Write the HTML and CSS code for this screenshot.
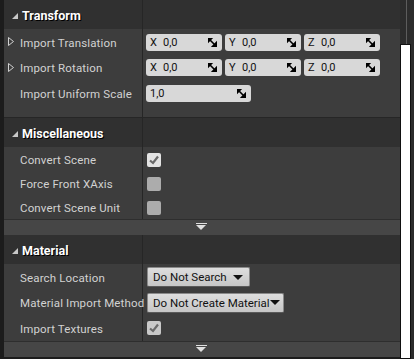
FILE: index.html
```html
<!DOCTYPE html>
<html lang="en">
<head>
    <meta charset="UTF-8">
    <title>Import Options</title>
    <link rel="stylesheet" href="styles.css">
</head>
<body>
    <div class="window">
        <div class="panel">
            <!-- Transform -->
            <section class="category transform">
                <div class="cat-head">
                    <div class="head-name"><span class="caret"></span>Transform</div>
                    <div class="head-value"></div>
                </div>
                <div class="cat-body">
                    <div class="row">
                        <div class="name"><svg class="expander" viewBox="0 0 6 9"><polygon points="0.5,0.5 5.5,4.5 0.5,8.5"/></svg>Import Translation</div>
                        <div class="value">
                            <div class="num"><span class="axis">X</span><span class="val">0,0</span><svg class="spin" viewBox="0 0 9 9"><polygon points="0,0 4,0 0,4"/><polygon points="9,9 9,4 4,9"/><line x1="1.5" y1="1.5" x2="7.5" y2="7.5"/></svg></div>
                            <div class="num"><span class="axis">Y</span><span class="val">0,0</span><svg class="spin" viewBox="0 0 9 9"><polygon points="0,0 4,0 0,4"/><polygon points="9,9 9,4 4,9"/><line x1="1.5" y1="1.5" x2="7.5" y2="7.5"/></svg></div>
                            <div class="num"><span class="axis">Z</span><span class="val">0,0</span><svg class="spin" viewBox="0 0 9 9"><polygon points="0,0 4,0 0,4"/><polygon points="9,9 9,4 4,9"/><line x1="1.5" y1="1.5" x2="7.5" y2="7.5"/></svg></div>
                        </div>
                    </div>
                    <div class="row">
                        <div class="name"><svg class="expander" viewBox="0 0 6 9"><polygon points="0.5,0.5 5.5,4.5 0.5,8.5"/></svg>Import Rotation</div>
                        <div class="value">
                            <div class="num"><span class="axis">X</span><span class="val">0,0</span><svg class="spin" viewBox="0 0 9 9"><polygon points="0,0 4,0 0,4"/><polygon points="9,9 9,4 4,9"/><line x1="1.5" y1="1.5" x2="7.5" y2="7.5"/></svg></div>
                            <div class="num"><span class="axis">Y</span><span class="val">0,0</span><svg class="spin" viewBox="0 0 9 9"><polygon points="0,0 4,0 0,4"/><polygon points="9,9 9,4 4,9"/><line x1="1.5" y1="1.5" x2="7.5" y2="7.5"/></svg></div>
                            <div class="num"><span class="axis">Z</span><span class="val">0,0</span><svg class="spin" viewBox="0 0 9 9"><polygon points="0,0 4,0 0,4"/><polygon points="9,9 9,4 4,9"/><line x1="1.5" y1="1.5" x2="7.5" y2="7.5"/></svg></div>
                        </div>
                    </div>
                    <div class="row">
                        <div class="name">Import Uniform Scale</div>
                        <div class="value">
                            <div class="num wide"><span class="val">1,0</span><svg class="spin" viewBox="0 0 9 9"><polygon points="0,0 4,0 0,4"/><polygon points="9,9 9,4 4,9"/><line x1="1.5" y1="1.5" x2="7.5" y2="7.5"/></svg></div>
                        </div>
                    </div>
                    <div class="row spacer">
                        <div class="name"></div>
                        <div class="value"></div>
                    </div>
                </div>
            </section>

            <!-- Miscellaneous -->
            <section class="category">
                <div class="cat-head">
                    <div class="head-name"><span class="caret"></span>Miscellaneous</div>
                    <div class="head-value"></div>
                </div>
                <div class="cat-body misc">
                    <div class="row">
                        <div class="name">Convert Scene</div>
                        <div class="value"><span class="check checked"><svg viewBox="0 0 14 14"><polyline points="3,7.5 6,10 11,3.5"/></svg></span></div>
                    </div>
                    <div class="row">
                        <div class="name">Force Front XAxis</div>
                        <div class="value"><span class="check"></span></div>
                    </div>
                    <div class="row">
                        <div class="name">Convert Scene Unit</div>
                        <div class="value"><span class="check"></span></div>
                    </div>
                </div>
                <div class="more"><span class="more-arrow"></span></div>
            </section>

            <!-- Material -->
            <section class="category">
                <div class="cat-head">
                    <div class="head-name"><span class="caret"></span>Material</div>
                    <div class="head-value"></div>
                </div>
                <div class="cat-body">
                    <div class="row">
                        <div class="name">Search Location</div>
                        <div class="value"><div class="combo">Do Not Search<span class="combo-arrow"></span></div></div>
                    </div>
                    <div class="row">
                        <div class="name">Material Import Method</div>
                        <div class="value"><div class="combo tight">Do Not Create Material<span class="combo-arrow"></span></div></div>
                    </div>
                    <div class="row">
                        <div class="name">Import Textures</div>
                        <div class="value"><span class="check checked dim"><svg viewBox="0 0 14 14"><polyline points="3,7.5 6,10 11,3.5"/></svg></span></div>
                    </div>
                </div>
                <div class="more"><span class="more-arrow"></span></div>
            </section>
        </div>

        <div class="scroll">
            <div class="track"></div>
            <div class="thumb"></div>
        </div>
    </div>
</body>
</html>
```

FILE: styles.css
```css
/* Base */
* {
    margin: 0;
    padding: 0;
    box-sizing: border-box;
}

body {
    background: #1c1c1c;
    font-family: 'Roboto', 'Liberation Sans', sans-serif;
    font-size: 11.5px;
    overflow: hidden;
}

.window {
    display: flex;
    height: 359px;
    padding-left: 4px;
}

.panel {
    width: 396px;
    display: flex;
    flex-direction: column;
}

.transform {
    border-bottom: 1px solid #262626;
}

/* Category header */
.cat-head {
    display: flex;
    height: 29px;
    background: #303030;
}

.head-name {
    width: 139px;
    display: flex;
    align-items: center;
    padding: 1px 0 0 4px;
    border-right: 1px solid #262626;
    color: #fff;
    font-size: 12.5px;
    font-weight: bold;
    text-shadow: 1px 1px 0 #000;
}

.head-value {
    flex: 1;
}

.caret {
    width: 0;
    height: 0;
    margin: 1px 4px 0 4px;
    border-left: 6px solid transparent;
    border-bottom: 6px solid #c8c8c8;
}

/* Rows */
.cat-body {
    background: #3d3d3d;
}

.row {
    display: flex;
    height: 25.5px;
}

.misc .row {
    height: 24px;
}

.row.spacer {
    height: 11.5px;
}

.name {
    width: 139px;
    display: flex;
    align-items: center;
    padding: 2px 0 0 16px;
    border-right: 1px solid #262626;
    color: #d2d2d2;
    letter-spacing: 0.15px;
    position: relative;
    white-space: nowrap;
}

.expander {
    position: absolute;
    left: 4px;
    top: 8px;
    width: 6px;
    height: 9px;
    fill: none;
    stroke: #d0d0d0;
    stroke-width: 1;
}

.value {
    flex: 1;
    display: flex;
    align-items: center;
    gap: 3px;
    padding: 1px 0 0 3px;
}

/* Numeric spin boxes */
.num {
    width: 76px;
    height: 17px;
    display: flex;
    align-items: center;
    padding: 0 5px 0 4px;
    background: #d8d8d8;
    border-radius: 3px;
    color: #111;
    font-size: 11px;
}

.num.wide {
    width: 105px;
}

.axis {
    width: 13px;
}

.val {
    flex: 1;
}

.spin {
    width: 9px;
    height: 9px;
    fill: #000;
    stroke: #000;
    stroke-width: 1.6;
}

/* Checkboxes */
.check {
    width: 14px;
    height: 14px;
    margin-left: 1px;
    border-radius: 2px;
    background: #acacac;
}

.check.checked {
    background: #e4e4e4;
}

.check.dim {
    background: #c9c9c9;
}

.check svg {
    width: 14px;
    height: 14px;
    fill: none;
    stroke: #6a6a6a;
    stroke-width: 2.2;
}

/* Combo buttons */
.combo {
    width: 103px;
    height: 20px;
    margin-left: 1px;
    display: flex;
    align-items: center;
    justify-content: space-between;
    padding: 0 6px 0 5px;
    background: linear-gradient(#dedede, #c6c6c6);
    border: 1px solid #8a8a8a;
    border-bottom-color: #5a5a5a;
    border-radius: 2px;
    color: #111;
    font-size: 11.5px;
    white-space: nowrap;
}

.combo.tight {
    width: 137px;
    padding-right: 3px;
}

.combo-arrow {
    width: 0;
    height: 0;
    border-left: 5px solid transparent;
    border-right: 5px solid transparent;
    border-top: 5px solid #111;
}

/* Advanced expander bar */
.more {
    height: 16px;
    display: flex;
    padding-top: 3px;
    background: #464646;
    border-top: 1px solid #2e2e2e;
}

.more-arrow {
    position: relative;
    width: 11px;
    height: 8px;
    margin-left: 192px;
    border-top: 1px solid #e0e0e0;
}

.more-arrow::after {
    content: '';
    position: absolute;
    left: 0;
    top: 1px;
    border-left: 5.5px solid transparent;
    border-right: 5.5px solid transparent;
    border-top: 5px solid #e0e0e0;
}

/* Scroll bar */
.scroll {
    width: 14px;
    display: flex;
    flex-direction: column;
    align-items: flex-start;
    background: #2c2c2c;
}

.track {
    width: 1px;
    height: 44px;
    margin-left: 6px;
    background: #5c5c5c;
}

.thumb {
    flex: 1;
    width: 11px;
    background: #fff;
    border: 1px solid #111;
}
```
